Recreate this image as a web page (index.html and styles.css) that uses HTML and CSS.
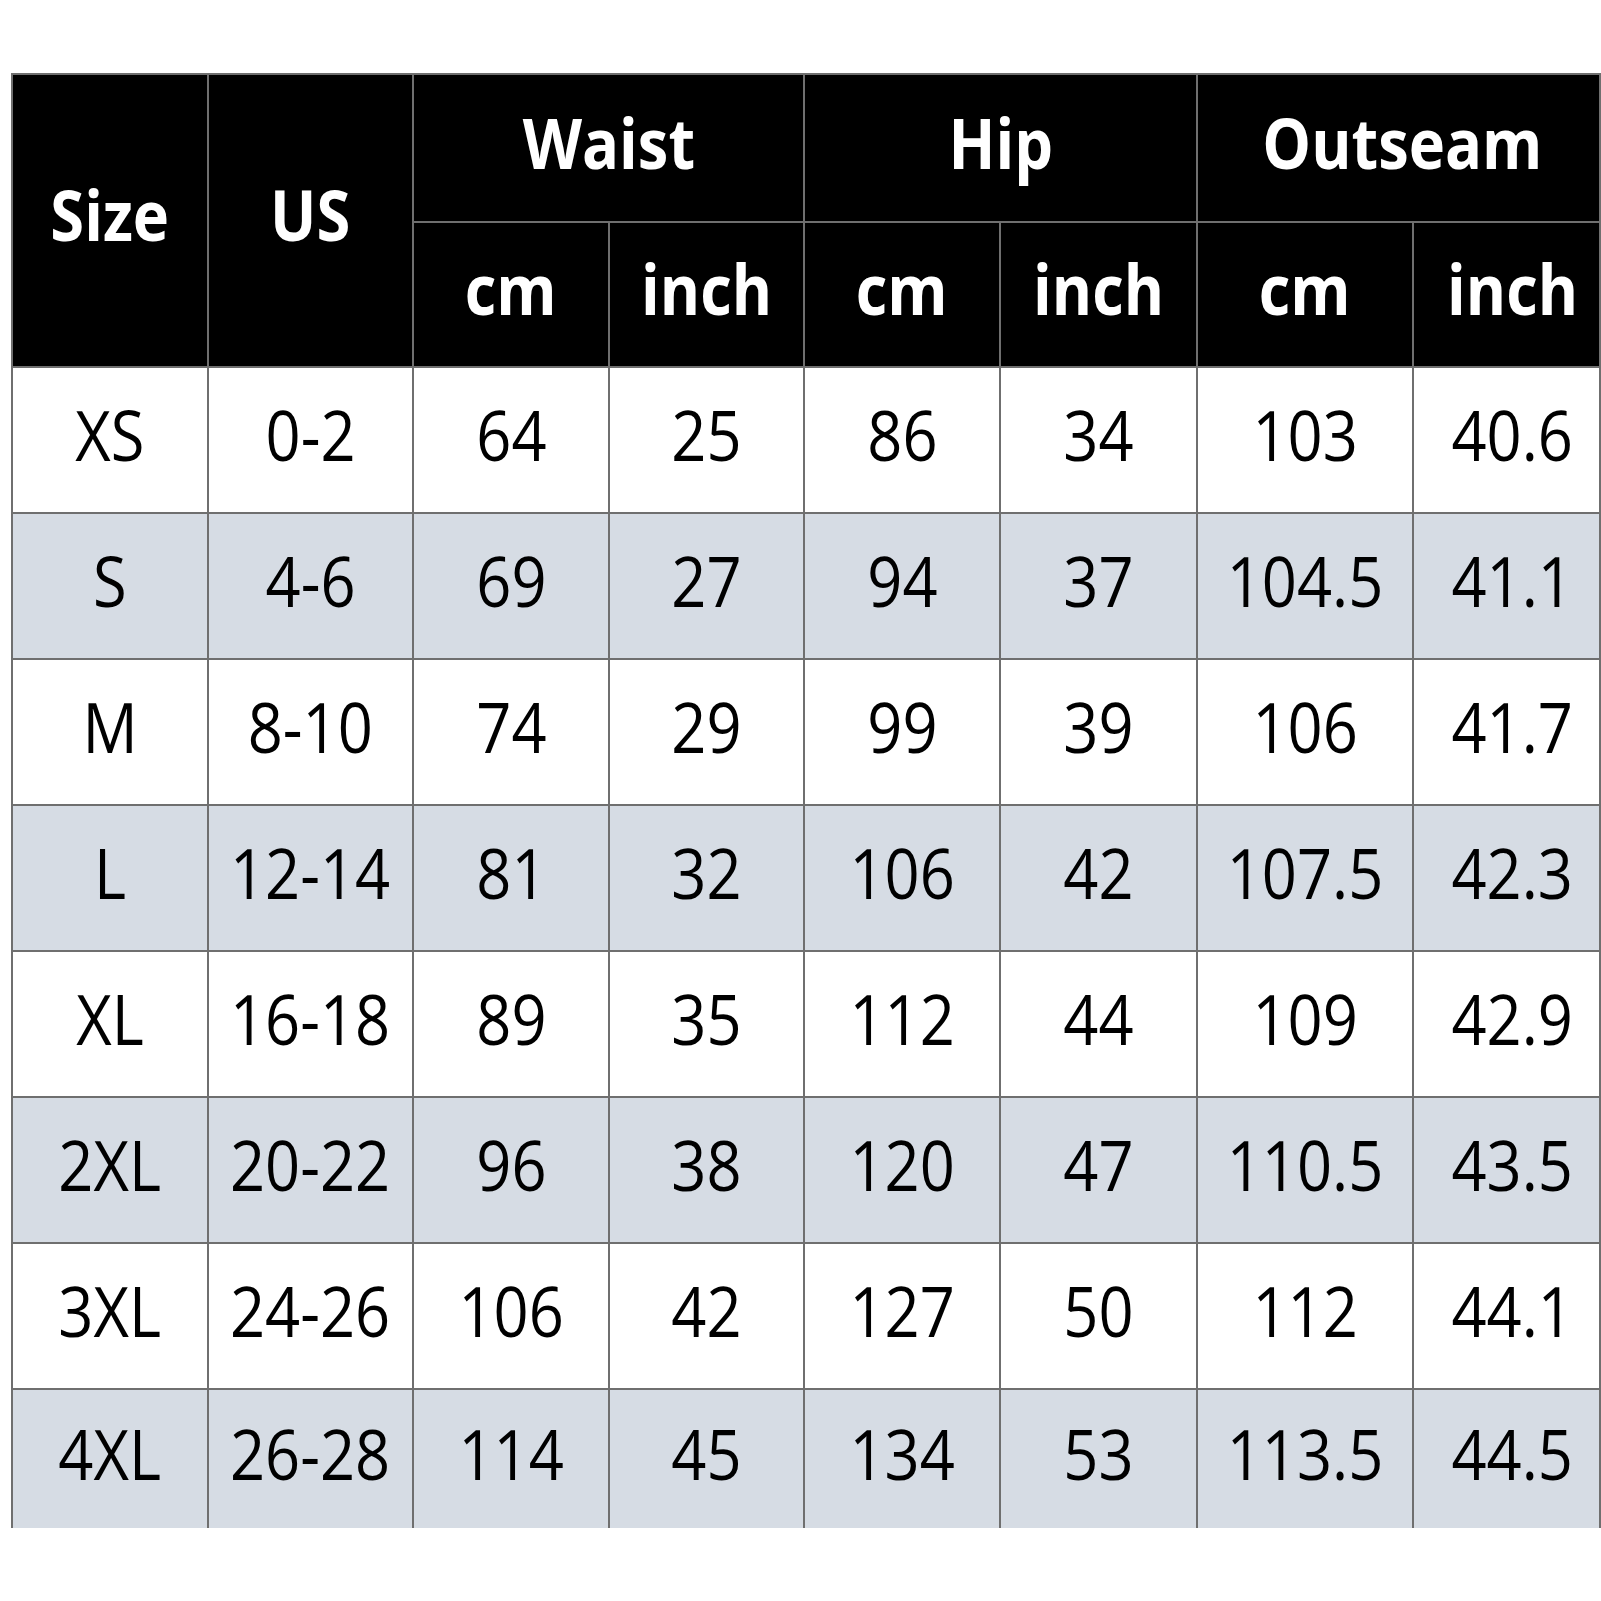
FILE: index.html
```html
<!DOCTYPE html>
<html lang="en">
<head>
<meta charset="utf-8">
<title>Size Chart</title>
<link rel="stylesheet" href="styles.css">
</head>
<body>
<div class="chart">
  <div class="cell head span-rows"><span>Size</span></div>
  <div class="cell head span-rows"><span>US</span></div>
  <div class="cell head span-cols"><span>Waist</span></div>
  <div class="cell head span-cols"><span>Hip</span></div>
  <div class="cell head span-cols edge-wide"><span>Outseam</span></div>
  <div class="cell head sub"><span>cm</span></div>
  <div class="cell head sub"><span>inch</span></div>
  <div class="cell head sub"><span>cm</span></div>
  <div class="cell head sub"><span>inch</span></div>
  <div class="cell head sub"><span>cm</span></div>
  <div class="cell head sub edge"><span>inch</span></div>

  <div class="cell"><span>XS</span></div><div class="cell"><span>0-2</span></div><div class="cell"><span>64</span></div><div class="cell"><span>25</span></div><div class="cell"><span>86</span></div><div class="cell"><span>34</span></div><div class="cell"><span>103</span></div><div class="cell edge"><span>40.6</span></div>
  <div class="cell alt"><span>S</span></div><div class="cell alt"><span>4-6</span></div><div class="cell alt"><span>69</span></div><div class="cell alt"><span>27</span></div><div class="cell alt"><span>94</span></div><div class="cell alt"><span>37</span></div><div class="cell alt"><span>104.5</span></div><div class="cell alt edge"><span>41.1</span></div>
  <div class="cell"><span>M</span></div><div class="cell"><span>8-10</span></div><div class="cell"><span>74</span></div><div class="cell"><span>29</span></div><div class="cell"><span>99</span></div><div class="cell"><span>39</span></div><div class="cell"><span>106</span></div><div class="cell edge"><span>41.7</span></div>
  <div class="cell alt"><span>L</span></div><div class="cell alt"><span>12-14</span></div><div class="cell alt"><span>81</span></div><div class="cell alt"><span>32</span></div><div class="cell alt"><span>106</span></div><div class="cell alt"><span>42</span></div><div class="cell alt"><span>107.5</span></div><div class="cell alt edge"><span>42.3</span></div>
  <div class="cell"><span>XL</span></div><div class="cell"><span>16-18</span></div><div class="cell"><span>89</span></div><div class="cell"><span>35</span></div><div class="cell"><span>112</span></div><div class="cell"><span>44</span></div><div class="cell"><span>109</span></div><div class="cell edge"><span>42.9</span></div>
  <div class="cell alt"><span>2XL</span></div><div class="cell alt"><span>20-22</span></div><div class="cell alt"><span>96</span></div><div class="cell alt"><span>38</span></div><div class="cell alt"><span>120</span></div><div class="cell alt"><span>47</span></div><div class="cell alt"><span>110.5</span></div><div class="cell alt edge"><span>43.5</span></div>
  <div class="cell"><span>3XL</span></div><div class="cell"><span>24-26</span></div><div class="cell"><span>106</span></div><div class="cell"><span>42</span></div><div class="cell"><span>127</span></div><div class="cell"><span>50</span></div><div class="cell"><span>112</span></div><div class="cell edge"><span>44.1</span></div>
  <div class="cell alt"><span>4XL</span></div><div class="cell alt"><span>26-28</span></div><div class="cell alt"><span>114</span></div><div class="cell alt"><span>45</span></div><div class="cell alt"><span>134</span></div><div class="cell alt"><span>53</span></div><div class="cell alt"><span>113.5</span></div><div class="cell alt edge"><span>44.5</span></div>
</div>
</body>
</html>
```
FILE: styles.css
```css
html, body {
  margin: 0;
  padding: 0;
  background: #ffffff;
}

body {
  width: 1601px;
  height: 1601px;
  overflow: hidden;
  padding-top: 73px;
  padding-left: 11px;
  box-sizing: border-box;
}

.chart {
  display: grid;
  width: 1590px;
  grid-template-columns: 194px 203px 194px 193px 194px 195px 214px 185px;
  grid-template-rows: 146px 143px 144px 144px 144px 144px 144px 144px 144px 138px;
  gap: 2px;
  padding: 2px 2px 0 2px;
  background: #6f6f6f;
  font-family: "Open Sans", "Noto Sans", sans-serif;
}

.cell {
  display: flex;
  align-items: center;
  justify-content: center;
  background: #ffffff;
  color: #000000;
  font-size: 69px;
  font-weight: 400;
  line-height: 1;
  padding-bottom: 12px;
  box-sizing: border-box;
}

.cell span {
  display: inline-block;
  white-space: nowrap;
  transform: scaleX(0.89);
}

.cell.edge {
  padding-left: 12px;
}

.cell.edge-wide {
  padding-left: 8px;
}

.cell.alt {
  background: #d6dce4;
}

.cell.head {
  background: #000000;
  color: #ffffff;
  font-weight: 700;
}

.cell.span-rows {
  grid-row: span 2;
}

.cell.span-cols {
  grid-column: span 2;
}
```
